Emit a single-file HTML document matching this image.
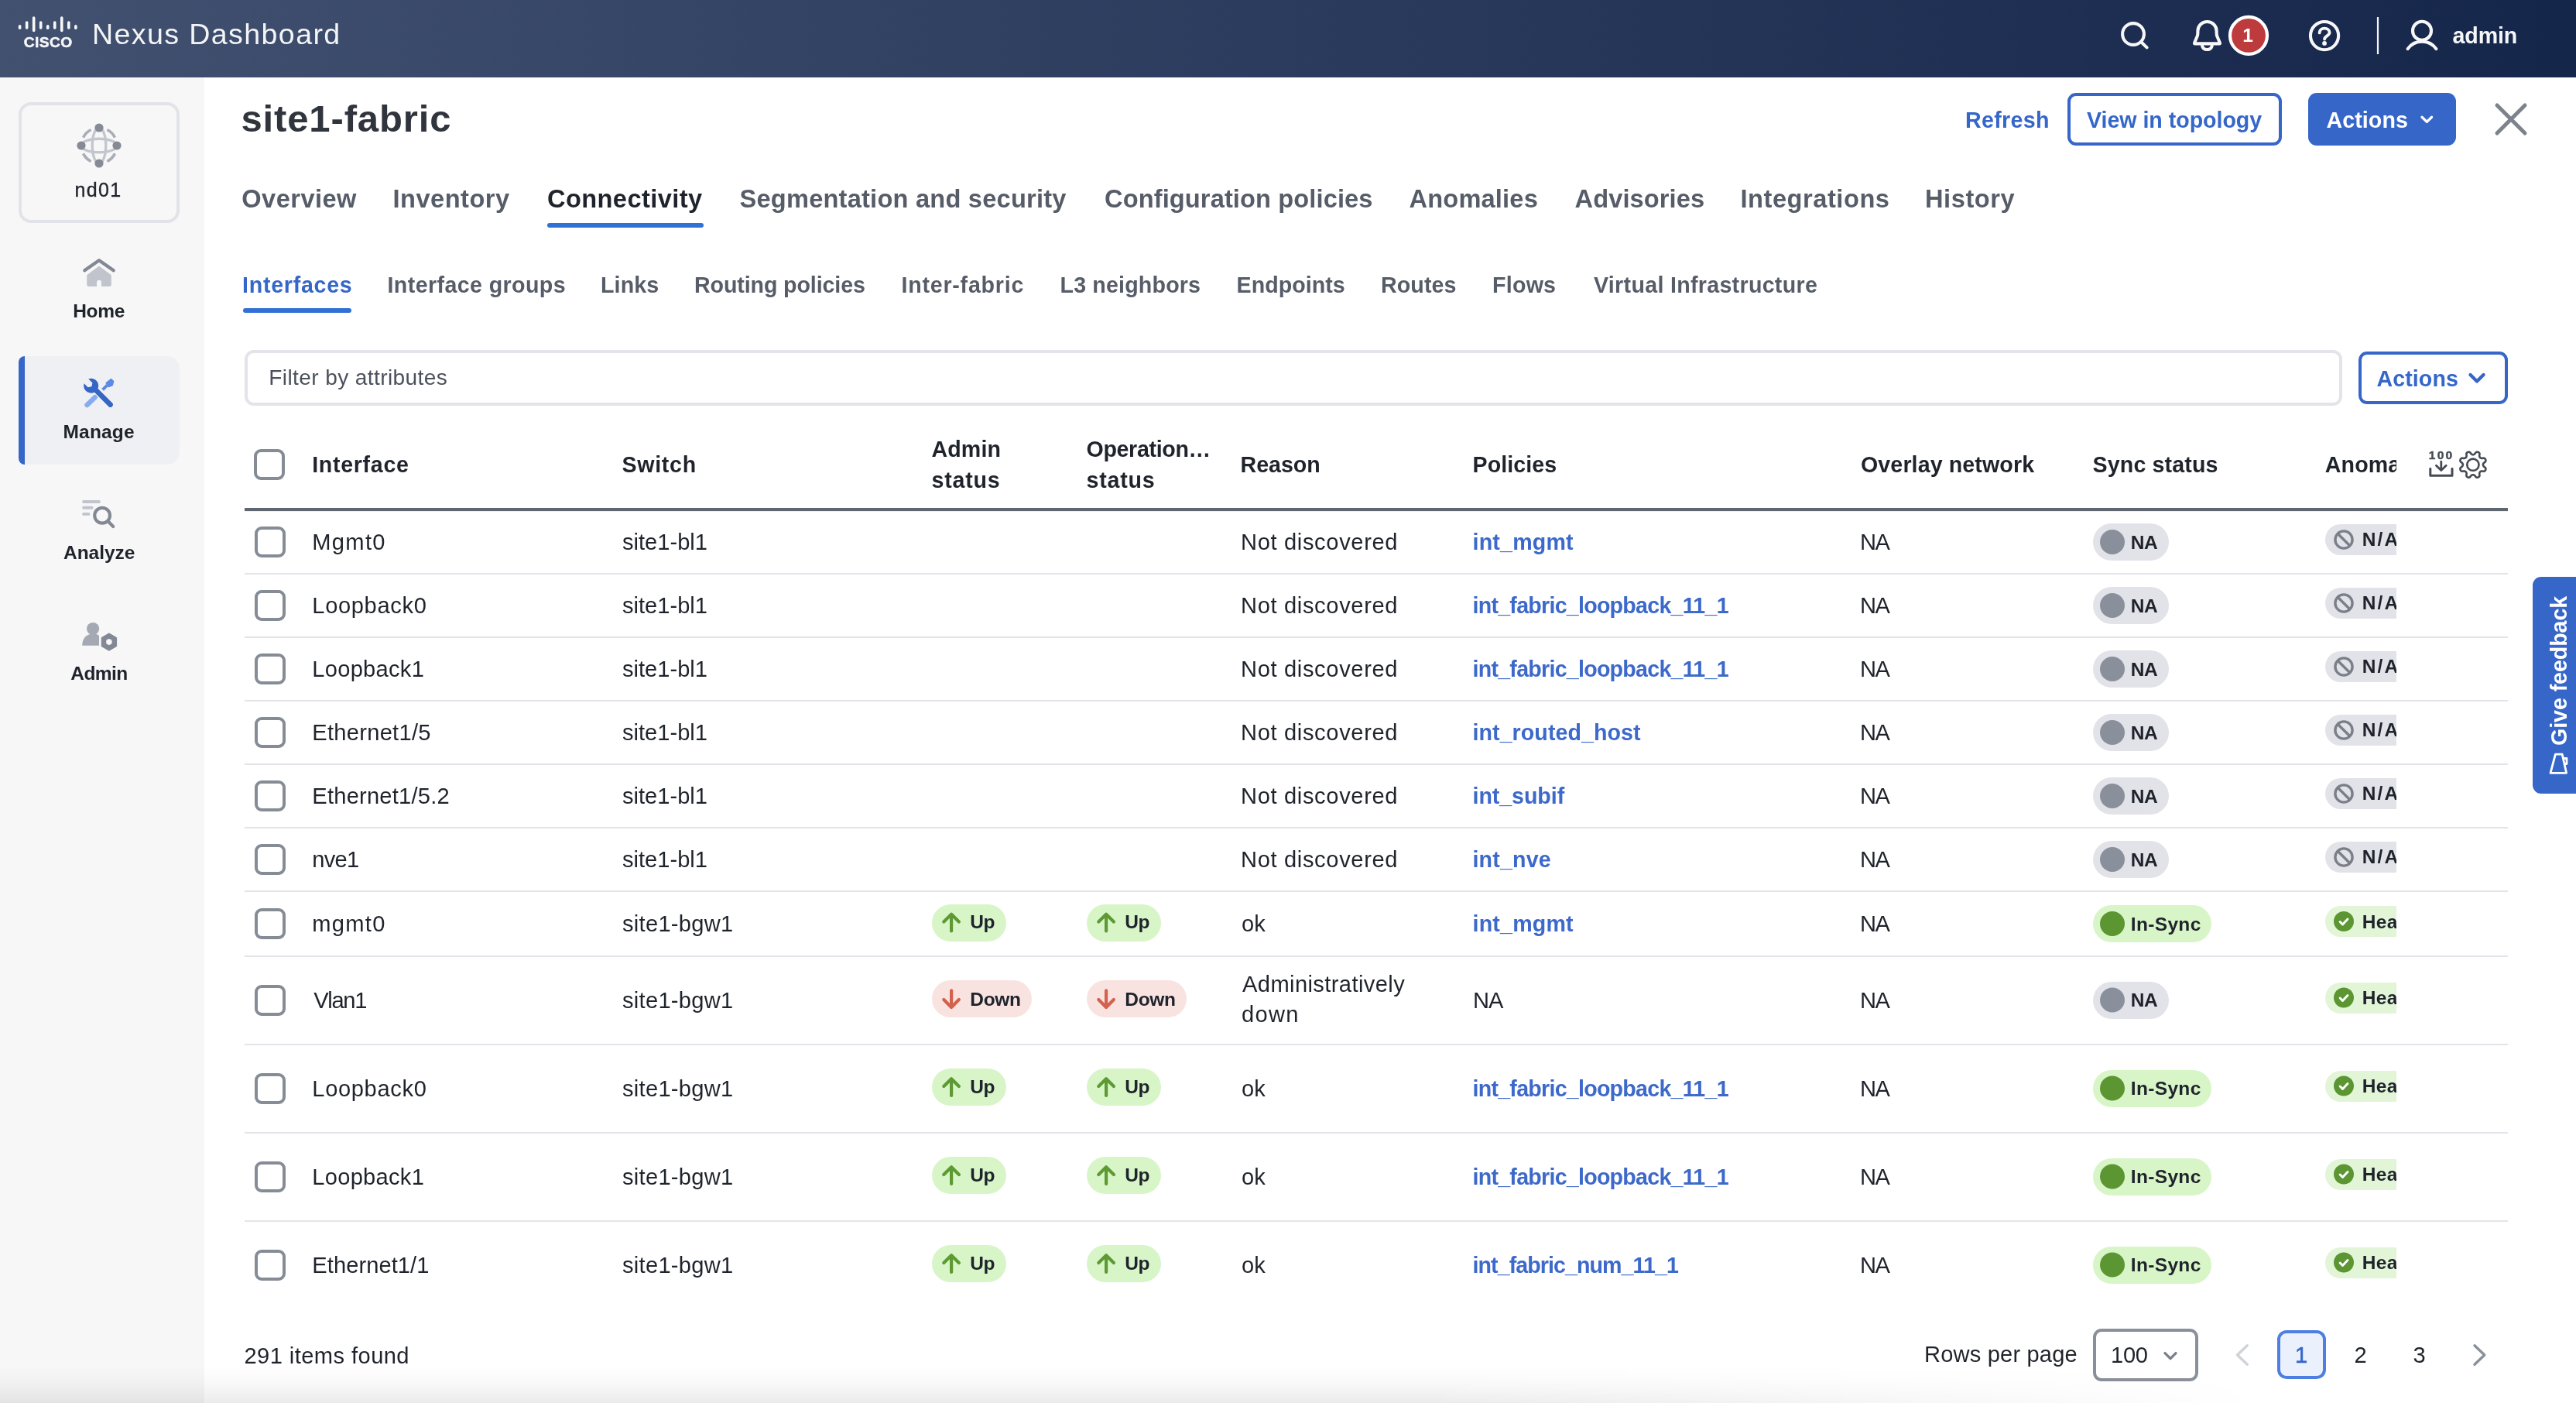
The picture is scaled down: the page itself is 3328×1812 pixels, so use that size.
<!DOCTYPE html>
<html lang="en"><head><meta charset="utf-8"><meta name="viewport" content="width=3328"><title>Nexus Dashboard - site1-fabric</title>
<style>
html,body{margin:0;padding:0;background:#fff}
body{width:3328px;height:1812px;overflow:hidden;font-family:"Liberation Sans",sans-serif}
#app{will-change:transform;position:relative;width:3328px;height:1812px;overflow:hidden;background:#fff}
#app>div,#app>svg,#app>span{position:absolute}
#ic{left:0;top:0}
.t{white-space:pre;line-height:40px;display:block}
.hdr{left:0;top:0;width:3328px;height:100px;background:linear-gradient(90deg,#425170 0%,#15264b 100%)}
.side{left:0;top:100px;width:264px;height:1712px;background:#f7f7f8}
.card{left:24px;top:132px;width:200px;height:148px;border:4px solid #e1e3e8;border-radius:16px}
.nav-act{left:24px;top:460px;width:208px;height:140px;background:#eff0f3;border-radius:8px 16px 16px 8px;overflow:hidden}
.nav-act:before{content:"";position:absolute;left:0;top:0;width:8px;height:100%;background:#3566c8}
.uline{height:6px;border-radius:3px;background:#3170d4}
.filter{left:316px;top:452px;width:2702px;height:64px;border:4px solid #e3e4e9;border-radius:12px;background:#fff}
.btn-o{border:4px solid #3566c8;border-radius:11px;background:#fff;box-sizing:border-box}
.btn-f{border-radius:11px;background:#3566c8}
.cb{width:32px;height:32px;border:4px solid #868c96;border-radius:9px;background:#fff}
.rb{left:316px;width:2924px;height:2px;background:#e3e4ea}
.hb{left:316px;top:656px;width:2924px;height:4px;background:#5f6670;box-shadow:0 1px 0 #eef0f2}
.pill{height:48px;border-radius:24px}
.pill.up{background:#d8f5c8}
.pill.down{background:#f9e3e1}
.pill.na{background:#e2e3e8}
.pill.ok{background:#e2f5d7}
.pill.half{border-radius:20px 0 0 20px}
.sel{left:2704px;top:1716px;width:128px;height:59.5px;border:4px solid #8a9099;border-radius:11px;background:#fff}
.pg1{left:2942px;top:1718px;width:55px;height:55px;border:4px solid #4d7fe2;border-radius:12px;background:#eaf1fd}
.fb{left:3272px;top:745px;width:56px;height:280px;background:#3566c8;border-radius:11px 0 0 11px}
.shade{left:0;top:1762px;width:3328px;height:50px;background:linear-gradient(to bottom,rgba(0,0,0,0) 0%,rgba(0,0,0,0.012) 30%,rgba(0,0,0,0.04) 65%,rgba(0,0,0,0.078) 100%);-webkit-mask-image:linear-gradient(to right,#000 0%,#000 55%,transparent 88%);mask-image:linear-gradient(to right,#000 0%,#000 55%,transparent 88%)}

</style></head>
<body>
<div id="app">
<div class="hdr"></div>
<div class="side"></div>
<div class="card"></div>
<div class="nav-act"></div>
<div class="uline" style="left:707px;top:288px;width:202px"></div>
<div class="uline" style="left:314px;top:398px;width:140px"></div>
<div class="filter"></div>
<div class="btn-o" style="left:2671px;top:120px;width:277px;height:68px"></div>
<div class="btn-f" style="left:2982px;top:120px;width:191px;height:68px"></div>
<div class="btn-o" style="left:3047px;top:454px;width:193px;height:68px"></div>
<div class="cb" style="left:328px;top:580px"></div>
<div class="hb"></div>
<div class="sel"></div>
<div class="pg1"></div>
<div class="fb"></div>
<div class="cb" style="left:329px;top:680px"></div>
<div class="rb" style="top:740px"></div>
<div class="pill na" style="left:2704px;top:676px;width:98px"></div>
<div class="pill na half" style="left:3004px;top:677px;width:92px;height:40px"></div>
<div class="cb" style="left:329px;top:762px"></div>
<div class="rb" style="top:822px"></div>
<div class="pill na" style="left:2704px;top:758px;width:98px"></div>
<div class="pill na half" style="left:3004px;top:759px;width:92px;height:40px"></div>
<div class="cb" style="left:329px;top:844px"></div>
<div class="rb" style="top:904px"></div>
<div class="pill na" style="left:2704px;top:840px;width:98px"></div>
<div class="pill na half" style="left:3004px;top:841px;width:92px;height:40px"></div>
<div class="cb" style="left:329px;top:926px"></div>
<div class="rb" style="top:986px"></div>
<div class="pill na" style="left:2704px;top:922px;width:98px"></div>
<div class="pill na half" style="left:3004px;top:923px;width:92px;height:40px"></div>
<div class="cb" style="left:329px;top:1008px"></div>
<div class="rb" style="top:1068px"></div>
<div class="pill na" style="left:2704px;top:1004px;width:98px"></div>
<div class="pill na half" style="left:3004px;top:1005px;width:92px;height:40px"></div>
<div class="cb" style="left:329px;top:1090px"></div>
<div class="rb" style="top:1150px"></div>
<div class="pill na" style="left:2704px;top:1086px;width:98px"></div>
<div class="pill na half" style="left:3004px;top:1087px;width:92px;height:40px"></div>
<div class="cb" style="left:329px;top:1173px"></div>
<div class="rb" style="top:1234px"></div>
<div class="pill up" style="left:1204px;top:1167.8px;width:96px"></div>
<div class="pill up" style="left:1404px;top:1167.8px;width:96px"></div>
<div class="pill up" style="left:2704px;top:1169px;width:153px"></div>
<div class="pill ok half" style="left:3004px;top:1170px;width:92px;height:40px"></div>
<div class="cb" style="left:329px;top:1271.5px"></div>
<div class="rb" style="top:1348px"></div>
<div class="pill down" style="left:1204px;top:1266.3px;width:129px"></div>
<div class="pill down" style="left:1404px;top:1266.3px;width:129px"></div>
<div class="pill na" style="left:2704px;top:1267.5px;width:98px"></div>
<div class="pill ok half" style="left:3004px;top:1268.5px;width:92px;height:40px"></div>
<div class="cb" style="left:329px;top:1385.5px"></div>
<div class="rb" style="top:1462px"></div>
<div class="pill up" style="left:1204px;top:1380.3px;width:96px"></div>
<div class="pill up" style="left:1404px;top:1380.3px;width:96px"></div>
<div class="pill up" style="left:2704px;top:1381.5px;width:153px"></div>
<div class="pill ok half" style="left:3004px;top:1382.5px;width:92px;height:40px"></div>
<div class="cb" style="left:329px;top:1499.5px"></div>
<div class="rb" style="top:1576px"></div>
<div class="pill up" style="left:1204px;top:1494.3px;width:96px"></div>
<div class="pill up" style="left:1404px;top:1494.3px;width:96px"></div>
<div class="pill up" style="left:2704px;top:1495.5px;width:153px"></div>
<div class="pill ok half" style="left:3004px;top:1496.5px;width:92px;height:40px"></div>
<div class="cb" style="left:329px;top:1613.5px"></div>
<div class="pill up" style="left:1204px;top:1608.3px;width:96px"></div>
<div class="pill up" style="left:1404px;top:1608.3px;width:96px"></div>
<div class="pill up" style="left:2704px;top:1609.5px;width:153px"></div>
<div class="pill ok half" style="left:3004px;top:1610.5px;width:92px;height:40px"></div>
<svg id="ic" width="3328" height="1812" viewBox="0 0 3328 1812">
<circle cx="2729" cy="700" r="16" fill="#8a909b"/>
<g stroke="#7a7f8a" stroke-width="3.4" fill="none"><circle cx="3028" cy="697" r="11.1"/><path d="M3020.2 689.2L3035.8 704.8"/></g>
<circle cx="2729" cy="782" r="16" fill="#8a909b"/>
<g stroke="#7a7f8a" stroke-width="3.4" fill="none"><circle cx="3028" cy="779" r="11.1"/><path d="M3020.2 771.2L3035.8 786.8"/></g>
<circle cx="2729" cy="864" r="16" fill="#8a909b"/>
<g stroke="#7a7f8a" stroke-width="3.4" fill="none"><circle cx="3028" cy="861" r="11.1"/><path d="M3020.2 853.2L3035.8 868.8"/></g>
<circle cx="2729" cy="946" r="16" fill="#8a909b"/>
<g stroke="#7a7f8a" stroke-width="3.4" fill="none"><circle cx="3028" cy="943" r="11.1"/><path d="M3020.2 935.2L3035.8 950.8"/></g>
<circle cx="2729" cy="1028" r="16" fill="#8a909b"/>
<g stroke="#7a7f8a" stroke-width="3.4" fill="none"><circle cx="3028" cy="1025" r="11.1"/><path d="M3020.2 1017.2L3035.8 1032.8"/></g>
<circle cx="2729" cy="1110" r="16" fill="#8a909b"/>
<g stroke="#7a7f8a" stroke-width="3.4" fill="none"><circle cx="3028" cy="1107" r="11.1"/><path d="M3020.2 1099.2L3035.8 1114.8"/></g>
<path d="M1229.1 1202.4V1180.8M1219.3 1190.5L1229.1 1180.7L1238.9 1190.5" stroke="#5d9a33" stroke-width="4.2" fill="none" stroke-linecap="round" stroke-linejoin="round"/>
<path d="M1429.1 1202.4V1180.8M1419.3 1190.5L1429.1 1180.7L1438.9 1190.5" stroke="#5d9a33" stroke-width="4.2" fill="none" stroke-linecap="round" stroke-linejoin="round"/>
<circle cx="2729" cy="1193" r="16" fill="#5b9632"/>
<circle cx="3028" cy="1190" r="13" fill="#5b9632"/><path d="M3023.1 1190.5l3.4 3.4l6.5 -6.9" stroke="#fff" stroke-width="2.9" fill="none" stroke-linecap="round" stroke-linejoin="round"/>
<path d="M1229.1 1279.3V1300.8M1219.3 1291.1L1229.1 1300.9L1238.9 1291.1" stroke="#d4614c" stroke-width="4.2" fill="none" stroke-linecap="round" stroke-linejoin="round"/>
<path d="M1429.1 1279.3V1300.8M1419.3 1291.1L1429.1 1300.9L1438.9 1291.1" stroke="#d4614c" stroke-width="4.2" fill="none" stroke-linecap="round" stroke-linejoin="round"/>
<circle cx="2729" cy="1291.5" r="16" fill="#8a909b"/>
<circle cx="3028" cy="1288.5" r="13" fill="#5b9632"/><path d="M3023.1 1289l3.4 3.4l6.5 -6.9" stroke="#fff" stroke-width="2.9" fill="none" stroke-linecap="round" stroke-linejoin="round"/>
<path d="M1229.1 1414.9V1393.3M1219.3 1403L1229.1 1393.2L1238.9 1403" stroke="#5d9a33" stroke-width="4.2" fill="none" stroke-linecap="round" stroke-linejoin="round"/>
<path d="M1429.1 1414.9V1393.3M1419.3 1403L1429.1 1393.2L1438.9 1403" stroke="#5d9a33" stroke-width="4.2" fill="none" stroke-linecap="round" stroke-linejoin="round"/>
<circle cx="2729" cy="1405.5" r="16" fill="#5b9632"/>
<circle cx="3028" cy="1402.5" r="13" fill="#5b9632"/><path d="M3023.1 1403l3.4 3.4l6.5 -6.9" stroke="#fff" stroke-width="2.9" fill="none" stroke-linecap="round" stroke-linejoin="round"/>
<path d="M1229.1 1528.9V1507.3M1219.3 1517L1229.1 1507.2L1238.9 1517" stroke="#5d9a33" stroke-width="4.2" fill="none" stroke-linecap="round" stroke-linejoin="round"/>
<path d="M1429.1 1528.9V1507.3M1419.3 1517L1429.1 1507.2L1438.9 1517" stroke="#5d9a33" stroke-width="4.2" fill="none" stroke-linecap="round" stroke-linejoin="round"/>
<circle cx="2729" cy="1519.5" r="16" fill="#5b9632"/>
<circle cx="3028" cy="1516.5" r="13" fill="#5b9632"/><path d="M3023.1 1517l3.4 3.4l6.5 -6.9" stroke="#fff" stroke-width="2.9" fill="none" stroke-linecap="round" stroke-linejoin="round"/>
<path d="M1229.1 1642.9V1621.3M1219.3 1631L1229.1 1621.2L1238.9 1631" stroke="#5d9a33" stroke-width="4.2" fill="none" stroke-linecap="round" stroke-linejoin="round"/>
<path d="M1429.1 1642.9V1621.3M1419.3 1631L1429.1 1621.2L1438.9 1631" stroke="#5d9a33" stroke-width="4.2" fill="none" stroke-linecap="round" stroke-linejoin="round"/>
<circle cx="2729" cy="1633.5" r="16" fill="#5b9632"/>
<circle cx="3028" cy="1630.5" r="13" fill="#5b9632"/><path d="M3023.1 1631l3.4 3.4l6.5 -6.9" stroke="#fff" stroke-width="2.9" fill="none" stroke-linecap="round" stroke-linejoin="round"/>
<path d="M25.60 33.7V36.3" stroke="#f7f7f7" stroke-width="3.6" stroke-linecap="round"/>
<path d="M34.63 29.1V35.9" stroke="#f7f7f7" stroke-width="3.6" stroke-linecap="round"/>
<path d="M43.66 23.1V39.4" stroke="#f7f7f7" stroke-width="3.6" stroke-linecap="round"/>
<path d="M52.69 29.1V35.9" stroke="#f7f7f7" stroke-width="3.6" stroke-linecap="round"/>
<path d="M61.72 33.7V36.3" stroke="#f7f7f7" stroke-width="3.6" stroke-linecap="round"/>
<path d="M70.75 29.1V35.9" stroke="#f7f7f7" stroke-width="3.6" stroke-linecap="round"/>
<path d="M79.78 23.1V39.4" stroke="#f7f7f7" stroke-width="3.6" stroke-linecap="round"/>
<path d="M88.81 29.1V35.9" stroke="#f7f7f7" stroke-width="3.6" stroke-linecap="round"/>
<path d="M97.84 33.7V36.3" stroke="#f7f7f7" stroke-width="3.6" stroke-linecap="round"/>
<g stroke="#f7f7f7" stroke-width="4.1" fill="none" stroke-linecap="round" stroke-linejoin="round"><circle cx="2756.0" cy="44.0" r="13.9"/><path d="M2766.2 54.2L2773.6 61.4"/><path d="M2835.8 56.4H2867.2Q2868.4 56.4 2867.9 55.2L2864.6 47.5C2863.9 45.9 2863.6 44.2 2863.6 42.5V40.1C2863.6 33.4 2858.2 28 2851.5 28C2844.8 28 2839.4 33.4 2839.4 40.1V42.5C2839.4 44.2 2839.1 45.9 2838.4 47.5L2835.1 55.2Q2834.6 56.4 2835.8 56.4Z"/><path d="M2845 58.8C2845.6 62 2848.2 64 2851.4 64C2854.6 64 2857.2 62 2857.8 58.8"/><circle cx="3003.05" cy="46.1" r="18.1"/><circle cx="3129" cy="39.8" r="12"/><path d="M3110.6 63.1A22.6 22.6 0 0 1 3147.4 63.1"/></g>
<path d="M2996.6 42.4C2996.6 38.9 2999.4 36.6 3003.1 36.6C3006.8 36.6 3009.6 38.9 3009.6 42.1C3009.6 46.3 3003.1 46.5 3003.1 50.6" stroke="#f7f7f7" stroke-width="3.9" fill="none" stroke-linecap="round" stroke-linejoin="round"/>
<circle cx="3003.05" cy="55.9" r="2.9" fill="#f7f7f7"/>
<rect x="3070.9" y="22" width="2.2" height="48" fill="#f7f7f7"/>
<circle cx="2905" cy="45.9" r="24" fill="#bd3a3d" stroke="#ffffff" stroke-width="4.2"/>
<path d="M148.49 198.44A23 23 0 0 1 138.44 208.49M117.56 208.49A23 23 0 0 1 107.51 198.44M107.51 177.56A23 23 0 0 1 117.56 167.51M138.44 167.51A23 23 0 0 1 148.49 177.56" stroke="#a9adb7" stroke-width="3.6" fill="none"/>
<g stroke="#c3c6ce" stroke-width="3.4" fill="none"><ellipse cx="128" cy="188" rx="8.8" ry="23"/><ellipse cx="128" cy="188" rx="23" ry="8.8"/></g>
<circle cx="128" cy="165" r="5.6" fill="#858a94"/>
<circle cx="151" cy="188" r="5.6" fill="#858a94"/>
<circle cx="128" cy="211" r="5.6" fill="#858a94"/>
<circle cx="105" cy="188" r="5.6" fill="#858a94"/>
<path d="M112.2 355.2L128 343.6L143.8 355.2V367.2Q143.8 369.9 141.1 369.9H131V364.8Q131 361.8 128 361.8Q125 361.8 125 364.8V369.9H114.9Q112.2 369.9 112.2 367.2Z" fill="#c1c4cd"/>
<path d="M109.3 349.2L128 336.3L146.7 349.2" stroke="#838994" stroke-width="4.4" fill="none" stroke-linecap="round" stroke-linejoin="round"/>
<path d="M112.5 523L122.6 513.2" stroke="#88aaf0" stroke-width="6.4" stroke-linecap="round"/>
<path d="M132.6 503.4L138.6 497.4" stroke="#5b8ae6" stroke-width="4" />
<path d="M137.2 494.6L143.6 489.6L146.6 492.6L145.2 497.6L140.6 499.6Z" fill="#5b8ae6" stroke="#5b8ae6" stroke-width="1.5" stroke-linejoin="round"/>
<path d="M121.5 501.5L142.6 522.6" stroke="#3566c5" stroke-width="6.6" stroke-linecap="round"/>
<path d="M114.2 489.3A9.5 9.5 0 1 1 108.6 495.3L113.6 500.2L118.4 499.2L119.4 494.4Z" fill="#3566c5"/>
<path d="M108.1 648H127.9M108.1 655.8H118.6M108.1 663.9H114.5" stroke="#c1c4cd" stroke-width="3.9" stroke-linecap="round"/>
<g stroke="#838994" stroke-width="4.2" fill="none" stroke-linecap="round"><circle cx="132.1" cy="665.8" r="9.9"/><path d="M139.6 673.3L146.2 679.9"/></g>
<circle cx="120.1" cy="812" r="8.1" fill="#a4a9b4"/>
<path d="M106.2 833.7C106.2 825 111.5 818.6 120 818.6C123.2 818.6 125.9 819.4 128 820.8V833.7Z" fill="#a4a9b4"/>
<polygon points="140.90,817.90 150.60,823.50 150.60,834.70 140.90,840.30 131.20,834.70 131.20,823.50" fill="#838994" stroke="#838994" stroke-width="1" stroke-linejoin="round"/>
<circle cx="140.9" cy="829.1" r="3.8" fill="#f7f7f8"/>
<path d="M3129 151.2L3135.3 157.4L3141.6 151.2" stroke="#fff" stroke-width="3.3" fill="none" stroke-linecap="round" stroke-linejoin="round"/>
<path d="M3191.5 484L3200 492.5L3208.5 484" stroke="#3566c8" stroke-width="4.4" fill="none" stroke-linecap="round" stroke-linejoin="round"/>
<path d="M2797 1747.6L2804 1754.6L2811 1747.6" stroke="#7b818b" stroke-width="3.4" fill="none" stroke-linecap="round" stroke-linejoin="round"/>
<path d="M3226 136L3262 172M3262 136L3226 172" stroke="#7d838c" stroke-width="5" stroke-linecap="round"/>
<path d="M2903.3 1737.7L2890.5 1750L2903.3 1762.3" stroke="#d0d3d9" stroke-width="3.4" fill="none" stroke-linecap="round" stroke-linejoin="round"/>
<path d="M3197 1737.7L3209.8 1750L3197 1762.3" stroke="#8a9099" stroke-width="3.4" fill="none" stroke-linecap="round" stroke-linejoin="round"/>
<g stroke="#454b54" stroke-width="3" fill="none" stroke-linecap="round" stroke-linejoin="round"><path d="M3139.8 605.2V614.3H3168V605.2"/></g>
<path d="M3153.8 596.2V606.8M3147.4 601.2L3153.8 607.4L3160.2 601.2" stroke="#454b54" stroke-width="2.8" fill="none" stroke-linecap="round" stroke-linejoin="round"/>
<polygon points="3211.16,606.94 3210.68,607.73 3209.97,608.38 3208.97,608.82 3206.96,608.49 3205.79,608.56 3204.98,608.81 3204.35,609.17 3203.87,609.65 3203.51,610.28 3203.26,611.09 3203.19,612.26 3203.52,614.27 3203.08,615.27 3202.43,615.98 3201.64,616.46 3200.74,616.69 3199.77,616.64 3198.75,616.25 3197.57,614.59 3196.69,613.81 3195.94,613.41 3195.24,613.22 3194.56,613.22 3193.86,613.41 3193.11,613.81 3192.23,614.59 3191.05,616.25 3190.03,616.64 3189.06,616.69 3188.16,616.46 3187.37,615.98 3186.72,615.27 3186.28,614.27 3186.61,612.26 3186.54,611.09 3186.29,610.28 3185.93,609.65 3185.45,609.17 3184.82,608.81 3184.01,608.56 3182.84,608.49 3180.83,608.82 3179.83,608.38 3179.12,607.73 3178.64,606.94 3178.41,606.04 3178.46,605.07 3178.85,604.05 3180.51,602.87 3181.29,601.99 3181.69,601.24 3181.88,600.54 3181.88,599.86 3181.69,599.16 3181.29,598.41 3180.51,597.53 3178.85,596.35 3178.46,595.33 3178.41,594.36 3178.64,593.46 3179.12,592.67 3179.83,592.02 3180.83,591.58 3182.84,591.91 3184.01,591.84 3184.82,591.59 3185.45,591.23 3185.93,590.75 3186.29,590.12 3186.54,589.31 3186.61,588.14 3186.28,586.13 3186.72,585.13 3187.37,584.42 3188.16,583.94 3189.06,583.71 3190.03,583.76 3191.05,584.15 3192.23,585.81 3193.11,586.59 3193.86,586.99 3194.56,587.18 3195.24,587.18 3195.94,586.99 3196.69,586.59 3197.57,585.81 3198.75,584.15 3199.77,583.76 3200.74,583.71 3201.64,583.94 3202.43,584.42 3203.08,585.13 3203.52,586.13 3203.19,588.14 3203.26,589.31 3203.51,590.12 3203.87,590.75 3204.35,591.23 3204.98,591.59 3205.79,591.84 3206.96,591.91 3208.97,591.58 3209.97,592.02 3210.68,592.67 3211.16,593.46 3211.39,594.36 3211.34,595.33 3210.95,596.35 3209.29,597.53 3208.51,598.41 3208.11,599.16 3207.92,599.86 3207.92,600.54 3208.11,601.24 3208.51,601.99 3209.29,602.87 3210.95,604.05 3211.34,605.07 3211.39,606.04" fill="none" stroke="#454b54" stroke-width="2.6" stroke-linejoin="round"/>
<circle cx="3194.9" cy="600.2" r="7.6" fill="none" stroke="#454b54" stroke-width="2.6"/>
<g stroke="#fff" stroke-width="2.8" fill="none" stroke-linejoin="round"><path d="M3295 998.3H3315.6L3310.2 974.2H3301.4Z"/><path d="M3311.5 979.5H3316V986.5H3313"/></g>
</svg>
<span class="t" style="left:119.0px;top:24.4px;font-size:37.6px;color:#f3f4f6;letter-spacing:1.39px">Nexus Dashboard</span>
<span class="t" style="left:30.8px;top:34.7px;font-size:19.2px;color:#f7f7f7;letter-spacing:0.38px;font-weight:700;-webkit-text-stroke:0.5px #f7f7f7">CISCO</span>
<span class="t" style="left:3168.5px;top:25.6px;font-size:28.6px;color:#f5f6f8;letter-spacing:-0.12px;font-weight:700">admin</span>
<span class="t" style="left:2897.2px;top:25.9px;font-size:24.5px;color:#ffffff;letter-spacing:0.00px;font-weight:700">1</span>
<span class="t" style="left:96.5px;top:225.0px;font-size:25.0px;color:#1f232b;letter-spacing:1.33px;-webkit-text-stroke:0.35px #1f232b">nd01</span>
<span class="t" style="left:94.2px;top:382.0px;font-size:24.5px;color:#1f232b;letter-spacing:-0.30px;font-weight:700">Home</span>
<span class="t" style="left:81.5px;top:538.0px;font-size:24.5px;color:#1f232b;letter-spacing:0.18px;font-weight:700">Manage</span>
<span class="t" style="left:82.0px;top:693.8px;font-size:24.5px;color:#1f232b;letter-spacing:-0.03px;font-weight:700">Analyze</span>
<span class="t" style="left:91.3px;top:849.8px;font-size:24.5px;color:#1f232b;letter-spacing:-0.55px;font-weight:700">Admin</span>
<span class="t" style="left:311.5px;top:133.0px;font-size:49.0px;color:#30343c;letter-spacing:0.86px;font-weight:700">site1-fabric</span>
<span class="t" style="left:2539.0px;top:135.0px;font-size:28.6px;color:#3567c9;letter-spacing:0.33px;font-weight:700">Refresh</span>
<span class="t" style="left:2696.0px;top:135.0px;font-size:28.6px;color:#3567c9;letter-spacing:-0.03px;font-weight:700">View in topology</span>
<span class="t" style="left:3005.5px;top:135.0px;font-size:28.6px;color:#ffffff;letter-spacing:0.08px;font-weight:700">Actions</span>
<span class="t" style="left:312.3px;top:236.8px;font-size:32.6px;color:#565c68;letter-spacing:0.46px;font-weight:700">Overview</span>
<span class="t" style="left:507.5px;top:236.8px;font-size:32.6px;color:#565c68;letter-spacing:0.50px;font-weight:700">Inventory</span>
<span class="t" style="left:707.0px;top:236.8px;font-size:32.6px;color:#1f232b;letter-spacing:0.41px;font-weight:700">Connectivity</span>
<span class="t" style="left:955.5px;top:236.8px;font-size:32.6px;color:#565c68;letter-spacing:0.23px;font-weight:700">Segmentation and security</span>
<span class="t" style="left:1427.0px;top:236.8px;font-size:32.6px;color:#565c68;letter-spacing:0.12px;font-weight:700">Configuration policies</span>
<span class="t" style="left:1820.5px;top:236.8px;font-size:32.6px;color:#565c68;letter-spacing:0.19px;font-weight:700">Anomalies</span>
<span class="t" style="left:2034.5px;top:236.8px;font-size:32.6px;color:#565c68;letter-spacing:0.11px;font-weight:700">Advisories</span>
<span class="t" style="left:2248.5px;top:236.8px;font-size:32.6px;color:#565c68;letter-spacing:0.55px;font-weight:700">Integrations</span>
<span class="t" style="left:2487.0px;top:236.8px;font-size:32.6px;color:#565c68;letter-spacing:0.58px;font-weight:700">History</span>
<span class="t" style="left:313.0px;top:348.4px;font-size:28.6px;color:#3567c9;letter-spacing:0.74px;font-weight:700">Interfaces</span>
<span class="t" style="left:500.5px;top:348.4px;font-size:28.6px;color:#565c68;letter-spacing:0.40px;font-weight:700">Interface groups</span>
<span class="t" style="left:776.0px;top:348.4px;font-size:28.6px;color:#565c68;letter-spacing:0.12px;font-weight:700">Links</span>
<span class="t" style="left:897.0px;top:348.4px;font-size:28.6px;color:#565c68;letter-spacing:-0.10px;font-weight:700">Routing policies</span>
<span class="t" style="left:1164.5px;top:348.4px;font-size:28.6px;color:#565c68;letter-spacing:0.77px;font-weight:700">Inter-fabric</span>
<span class="t" style="left:1369.5px;top:348.4px;font-size:28.6px;color:#565c68;letter-spacing:0.18px;font-weight:700">L3 neighbors</span>
<span class="t" style="left:1597.5px;top:348.4px;font-size:28.6px;color:#565c68;letter-spacing:0.06px;font-weight:700">Endpoints</span>
<span class="t" style="left:1784.0px;top:348.4px;font-size:28.6px;color:#565c68;letter-spacing:0.10px;font-weight:700">Routes</span>
<span class="t" style="left:1928.0px;top:348.4px;font-size:28.6px;color:#565c68;letter-spacing:0.25px;font-weight:700">Flows</span>
<span class="t" style="left:2059.0px;top:348.4px;font-size:28.6px;color:#565c68;letter-spacing:0.31px;font-weight:700">Virtual Infrastructure</span>
<span class="t" style="left:347.3px;top:467.8px;font-size:28.1px;color:#4b515c;letter-spacing:0.38px">Filter by attributes</span>
<span class="t" style="left:3070.5px;top:468.5px;font-size:28.6px;color:#3567c9;letter-spacing:0.08px;font-weight:700">Actions</span>
<span class="t" style="left:403.2px;top:580.0px;font-size:28.6px;color:#1f232b;letter-spacing:0.69px;font-weight:700">Interface</span>
<span class="t" style="left:803.5px;top:580.0px;font-size:28.6px;color:#1f232b;letter-spacing:0.70px;font-weight:700">Switch</span>
<span class="t" style="left:1203.5px;top:560.0px;font-size:28.6px;color:#1f232b;letter-spacing:0.12px;font-weight:700">Admin</span>
<span class="t" style="left:1203.5px;top:599.5px;font-size:28.6px;color:#1f232b;letter-spacing:0.80px;font-weight:700">status</span>
<span class="t" style="left:1403.5px;top:560.0px;font-size:28.6px;color:#1f232b;letter-spacing:-0.33px;font-weight:700">Operation…</span>
<span class="t" style="left:1403.5px;top:599.5px;font-size:28.6px;color:#1f232b;letter-spacing:0.80px;font-weight:700">status</span>
<span class="t" style="left:1602.5px;top:580.0px;font-size:28.6px;color:#1f232b;letter-spacing:0.00px;font-weight:700">Reason</span>
<span class="t" style="left:1902.5px;top:580.0px;font-size:28.6px;color:#1f232b;letter-spacing:0.07px;font-weight:700">Policies</span>
<span class="t" style="left:2404.0px;top:580.0px;font-size:28.6px;color:#1f232b;letter-spacing:0.11px;font-weight:700">Overlay network</span>
<span class="t" style="left:2703.5px;top:580.0px;font-size:28.6px;color:#1f232b;letter-spacing:0.15px;font-weight:700">Sync status</span>
<span class="t" style="left:3003.8px;top:579.6px;font-size:28.6px;color:#1f232b;letter-spacing:0.11px;font-weight:700;width:92.2px;overflow:hidden">Anomaly level</span>
<span class="t" style="left:3137.8px;top:568.4px;font-size:15.5px;color:#454b54;letter-spacing:2.25px;font-weight:700;-webkit-text-stroke:0.45px #454b54">100</span>
<span class="t" style="left:403.3px;top:680.0px;font-size:29.1px;color:#1f232b;letter-spacing:1.33px">Mgmt0</span>
<span class="t" style="left:804.0px;top:680.0px;font-size:29.1px;color:#1f232b;letter-spacing:0.00px">site1-bl1</span>
<span class="t" style="left:1603.0px;top:680.0px;font-size:29.1px;color:#1f232b;letter-spacing:0.65px">Not discovered</span>
<span class="t" style="left:1902.5px;top:680.0px;font-size:28.6px;color:#3c69ca;letter-spacing:0.21px;font-weight:700">int_mgmt</span>
<span class="t" style="left:2403.0px;top:680.0px;font-size:29.1px;color:#1f232b;letter-spacing:-1.50px">NA</span>
<span class="t" style="left:2752.8px;top:680.7px;font-size:24.5px;color:#1f232b;letter-spacing:-0.60px;font-weight:700">NA</span>
<span class="t" style="left:3051.8px;top:677.1px;font-size:24.5px;color:#1f232b;letter-spacing:2.10px;font-weight:700;width:44.2px;overflow:hidden">N/A</span>
<span class="t" style="left:403.3px;top:762.0px;font-size:29.1px;color:#1f232b;letter-spacing:0.65px">Loopback0</span>
<span class="t" style="left:804.0px;top:762.0px;font-size:29.1px;color:#1f232b;letter-spacing:0.00px">site1-bl1</span>
<span class="t" style="left:1603.0px;top:762.0px;font-size:29.1px;color:#1f232b;letter-spacing:0.65px">Not discovered</span>
<span class="t" style="left:1902.5px;top:762.0px;font-size:28.6px;color:#3c69ca;letter-spacing:-0.74px;font-weight:700">int_fabric_loopback_11_1</span>
<span class="t" style="left:2403.0px;top:762.0px;font-size:29.1px;color:#1f232b;letter-spacing:-1.50px">NA</span>
<span class="t" style="left:2752.8px;top:762.7px;font-size:24.5px;color:#1f232b;letter-spacing:-0.60px;font-weight:700">NA</span>
<span class="t" style="left:3051.8px;top:759.1px;font-size:24.5px;color:#1f232b;letter-spacing:2.10px;font-weight:700;width:44.2px;overflow:hidden">N/A</span>
<span class="t" style="left:403.3px;top:844.0px;font-size:29.1px;color:#1f232b;letter-spacing:0.27px">Loopback1</span>
<span class="t" style="left:804.0px;top:844.0px;font-size:29.1px;color:#1f232b;letter-spacing:0.00px">site1-bl1</span>
<span class="t" style="left:1603.0px;top:844.0px;font-size:29.1px;color:#1f232b;letter-spacing:0.65px">Not discovered</span>
<span class="t" style="left:1902.5px;top:844.0px;font-size:28.6px;color:#3c69ca;letter-spacing:-0.74px;font-weight:700">int_fabric_loopback_11_1</span>
<span class="t" style="left:2403.0px;top:844.0px;font-size:29.1px;color:#1f232b;letter-spacing:-1.50px">NA</span>
<span class="t" style="left:2752.8px;top:844.7px;font-size:24.5px;color:#1f232b;letter-spacing:-0.60px;font-weight:700">NA</span>
<span class="t" style="left:3051.8px;top:841.1px;font-size:24.5px;color:#1f232b;letter-spacing:2.10px;font-weight:700;width:44.2px;overflow:hidden">N/A</span>
<span class="t" style="left:403.3px;top:926.0px;font-size:29.1px;color:#1f232b;letter-spacing:0.27px">Ethernet1/5</span>
<span class="t" style="left:804.0px;top:926.0px;font-size:29.1px;color:#1f232b;letter-spacing:0.00px">site1-bl1</span>
<span class="t" style="left:1603.0px;top:926.0px;font-size:29.1px;color:#1f232b;letter-spacing:0.65px">Not discovered</span>
<span class="t" style="left:1902.5px;top:926.0px;font-size:28.6px;color:#3c69ca;letter-spacing:0.07px;font-weight:700">int_routed_host</span>
<span class="t" style="left:2403.0px;top:926.0px;font-size:29.1px;color:#1f232b;letter-spacing:-1.50px">NA</span>
<span class="t" style="left:2752.8px;top:926.7px;font-size:24.5px;color:#1f232b;letter-spacing:-0.60px;font-weight:700">NA</span>
<span class="t" style="left:3051.8px;top:923.1px;font-size:24.5px;color:#1f232b;letter-spacing:2.10px;font-weight:700;width:44.2px;overflow:hidden">N/A</span>
<span class="t" style="left:403.3px;top:1008.0px;font-size:29.1px;color:#1f232b;letter-spacing:0.22px">Ethernet1/5.2</span>
<span class="t" style="left:804.0px;top:1008.0px;font-size:29.1px;color:#1f232b;letter-spacing:0.00px">site1-bl1</span>
<span class="t" style="left:1603.0px;top:1008.0px;font-size:29.1px;color:#1f232b;letter-spacing:0.65px">Not discovered</span>
<span class="t" style="left:1902.5px;top:1008.0px;font-size:28.6px;color:#3c69ca;letter-spacing:-0.06px;font-weight:700">int_subif</span>
<span class="t" style="left:2403.0px;top:1008.0px;font-size:29.1px;color:#1f232b;letter-spacing:-1.50px">NA</span>
<span class="t" style="left:2752.8px;top:1008.7px;font-size:24.5px;color:#1f232b;letter-spacing:-0.60px;font-weight:700">NA</span>
<span class="t" style="left:3051.8px;top:1005.1px;font-size:24.5px;color:#1f232b;letter-spacing:2.10px;font-weight:700;width:44.2px;overflow:hidden">N/A</span>
<span class="t" style="left:403.3px;top:1090.0px;font-size:29.1px;color:#1f232b;letter-spacing:-0.77px">nve1</span>
<span class="t" style="left:804.0px;top:1090.0px;font-size:29.1px;color:#1f232b;letter-spacing:0.00px">site1-bl1</span>
<span class="t" style="left:1603.0px;top:1090.0px;font-size:29.1px;color:#1f232b;letter-spacing:0.65px">Not discovered</span>
<span class="t" style="left:1902.5px;top:1090.0px;font-size:28.6px;color:#3c69ca;letter-spacing:0.17px;font-weight:700">int_nve</span>
<span class="t" style="left:2403.0px;top:1090.0px;font-size:29.1px;color:#1f232b;letter-spacing:-1.50px">NA</span>
<span class="t" style="left:2752.8px;top:1090.7px;font-size:24.5px;color:#1f232b;letter-spacing:-0.60px;font-weight:700">NA</span>
<span class="t" style="left:3051.8px;top:1087.1px;font-size:24.5px;color:#1f232b;letter-spacing:2.10px;font-weight:700;width:44.2px;overflow:hidden">N/A</span>
<span class="t" style="left:403.3px;top:1172.5px;font-size:29.1px;color:#1f232b;letter-spacing:1.30px">mgmt0</span>
<span class="t" style="left:804.0px;top:1172.5px;font-size:29.1px;color:#1f232b;letter-spacing:0.28px">site1-bgw1</span>
<span class="t" style="left:1604.0px;top:1172.5px;font-size:29.1px;color:#1f232b;letter-spacing:0.00px">ok</span>
<span class="t" style="left:1902.5px;top:1172.5px;font-size:28.6px;color:#3c69ca;letter-spacing:0.21px;font-weight:700">int_mgmt</span>
<span class="t" style="left:2403.0px;top:1172.5px;font-size:29.1px;color:#1f232b;letter-spacing:-1.50px">NA</span>
<span class="t" style="left:1253.3px;top:1171.3px;font-size:24.5px;color:#1f232b;letter-spacing:-0.55px;font-weight:700">Up</span>
<span class="t" style="left:1453.3px;top:1171.3px;font-size:24.5px;color:#1f232b;letter-spacing:-0.55px;font-weight:700">Up</span>
<span class="t" style="left:2752.8px;top:1173.7px;font-size:24.5px;color:#1f232b;letter-spacing:0.33px;font-weight:700">In-Sync</span>
<span class="t" style="left:3051.8px;top:1170.5px;font-size:24.5px;color:#1f232b;letter-spacing:0.33px;font-weight:700;width:44.2px;overflow:hidden">Healthy</span>
<span class="t" style="left:405.3px;top:1271.5px;font-size:29.1px;color:#1f232b;letter-spacing:-1.33px">Vlan1</span>
<span class="t" style="left:804.0px;top:1271.5px;font-size:29.1px;color:#1f232b;letter-spacing:0.28px">site1-bgw1</span>
<span class="t" style="left:1605.0px;top:1251.0px;font-size:29.1px;color:#1f232b;letter-spacing:0.40px">Administratively</span>
<span class="t" style="left:1604.0px;top:1290.0px;font-size:29.1px;color:#1f232b;letter-spacing:1.33px">down</span>
<span class="t" style="left:1903.0px;top:1271.5px;font-size:29.1px;color:#1f232b;letter-spacing:-1.00px">NA</span>
<span class="t" style="left:2403.0px;top:1271.5px;font-size:29.1px;color:#1f232b;letter-spacing:-1.50px">NA</span>
<span class="t" style="left:1253.3px;top:1270.5px;font-size:24.5px;color:#1f232b;letter-spacing:-0.33px;font-weight:700">Down</span>
<span class="t" style="left:1453.3px;top:1270.5px;font-size:24.5px;color:#1f232b;letter-spacing:-0.33px;font-weight:700">Down</span>
<span class="t" style="left:2752.8px;top:1272.2px;font-size:24.5px;color:#1f232b;letter-spacing:-0.60px;font-weight:700">NA</span>
<span class="t" style="left:3051.8px;top:1269.0px;font-size:24.5px;color:#1f232b;letter-spacing:0.33px;font-weight:700;width:44.2px;overflow:hidden">Healthy</span>
<span class="t" style="left:403.3px;top:1385.5px;font-size:29.1px;color:#1f232b;letter-spacing:0.65px">Loopback0</span>
<span class="t" style="left:804.0px;top:1385.5px;font-size:29.1px;color:#1f232b;letter-spacing:0.28px">site1-bgw1</span>
<span class="t" style="left:1604.0px;top:1385.5px;font-size:29.1px;color:#1f232b;letter-spacing:0.00px">ok</span>
<span class="t" style="left:1902.5px;top:1385.5px;font-size:28.6px;color:#3c69ca;letter-spacing:-0.74px;font-weight:700">int_fabric_loopback_11_1</span>
<span class="t" style="left:2403.0px;top:1385.5px;font-size:29.1px;color:#1f232b;letter-spacing:-1.50px">NA</span>
<span class="t" style="left:1253.3px;top:1383.8px;font-size:24.5px;color:#1f232b;letter-spacing:-0.55px;font-weight:700">Up</span>
<span class="t" style="left:1453.3px;top:1383.8px;font-size:24.5px;color:#1f232b;letter-spacing:-0.55px;font-weight:700">Up</span>
<span class="t" style="left:2752.8px;top:1386.2px;font-size:24.5px;color:#1f232b;letter-spacing:0.33px;font-weight:700">In-Sync</span>
<span class="t" style="left:3051.8px;top:1383.0px;font-size:24.5px;color:#1f232b;letter-spacing:0.33px;font-weight:700;width:44.2px;overflow:hidden">Healthy</span>
<span class="t" style="left:403.3px;top:1499.5px;font-size:29.1px;color:#1f232b;letter-spacing:0.27px">Loopback1</span>
<span class="t" style="left:804.0px;top:1499.5px;font-size:29.1px;color:#1f232b;letter-spacing:0.28px">site1-bgw1</span>
<span class="t" style="left:1604.0px;top:1499.5px;font-size:29.1px;color:#1f232b;letter-spacing:0.00px">ok</span>
<span class="t" style="left:1902.5px;top:1499.5px;font-size:28.6px;color:#3c69ca;letter-spacing:-0.74px;font-weight:700">int_fabric_loopback_11_1</span>
<span class="t" style="left:2403.0px;top:1499.5px;font-size:29.1px;color:#1f232b;letter-spacing:-1.50px">NA</span>
<span class="t" style="left:1253.3px;top:1497.8px;font-size:24.5px;color:#1f232b;letter-spacing:-0.55px;font-weight:700">Up</span>
<span class="t" style="left:1453.3px;top:1497.8px;font-size:24.5px;color:#1f232b;letter-spacing:-0.55px;font-weight:700">Up</span>
<span class="t" style="left:2752.8px;top:1500.2px;font-size:24.5px;color:#1f232b;letter-spacing:0.33px;font-weight:700">In-Sync</span>
<span class="t" style="left:3051.8px;top:1497.0px;font-size:24.5px;color:#1f232b;letter-spacing:0.33px;font-weight:700;width:44.2px;overflow:hidden">Healthy</span>
<span class="t" style="left:403.3px;top:1613.5px;font-size:29.1px;color:#1f232b;letter-spacing:0.07px">Ethernet1/1</span>
<span class="t" style="left:804.0px;top:1613.5px;font-size:29.1px;color:#1f232b;letter-spacing:0.28px">site1-bgw1</span>
<span class="t" style="left:1604.0px;top:1613.5px;font-size:29.1px;color:#1f232b;letter-spacing:0.00px">ok</span>
<span class="t" style="left:1902.5px;top:1613.5px;font-size:28.6px;color:#3c69ca;letter-spacing:-0.92px;font-weight:700">int_fabric_num_11_1</span>
<span class="t" style="left:2403.0px;top:1613.5px;font-size:29.1px;color:#1f232b;letter-spacing:-1.50px">NA</span>
<span class="t" style="left:1253.3px;top:1611.8px;font-size:24.5px;color:#1f232b;letter-spacing:-0.55px;font-weight:700">Up</span>
<span class="t" style="left:1453.3px;top:1611.8px;font-size:24.5px;color:#1f232b;letter-spacing:-0.55px;font-weight:700">Up</span>
<span class="t" style="left:2752.8px;top:1614.2px;font-size:24.5px;color:#1f232b;letter-spacing:0.33px;font-weight:700">In-Sync</span>
<span class="t" style="left:3051.8px;top:1611.0px;font-size:24.5px;color:#1f232b;letter-spacing:0.33px;font-weight:700;width:44.2px;overflow:hidden">Healthy</span>
<span class="t" style="left:315.5px;top:1730.5px;font-size:29.1px;color:#1f232b;letter-spacing:0.43px">291 items found</span>
<span class="t" style="left:2486.0px;top:1729.0px;font-size:29.1px;color:#1f232b;letter-spacing:0.17px">Rows per page</span>
<span class="t" style="left:2727.0px;top:1729.5px;font-size:29.1px;color:#1f232b;letter-spacing:-0.25px">100</span>
<span class="t" style="left:2965.0px;top:1729.5px;font-size:29.1px;color:#3567c9;letter-spacing:0.00px;-webkit-text-stroke:0.6px #3567c9">1</span>
<span class="t" style="left:3041.5px;top:1729.5px;font-size:29.1px;color:#1f232b;letter-spacing:0.00px">2</span>
<span class="t" style="left:3117.5px;top:1729.5px;font-size:29.1px;color:#1f232b;letter-spacing:0.00px">3</span>
<span class="t" style="left:3285.6px;top:962.7px;font-size:28.6px;color:#ffffff;letter-spacing:-0.06px;font-weight:700;transform-origin:0 0;transform:rotate(-90deg)">Give feedback</span>
<div class="shade"></div>
</div>
</body></html>
